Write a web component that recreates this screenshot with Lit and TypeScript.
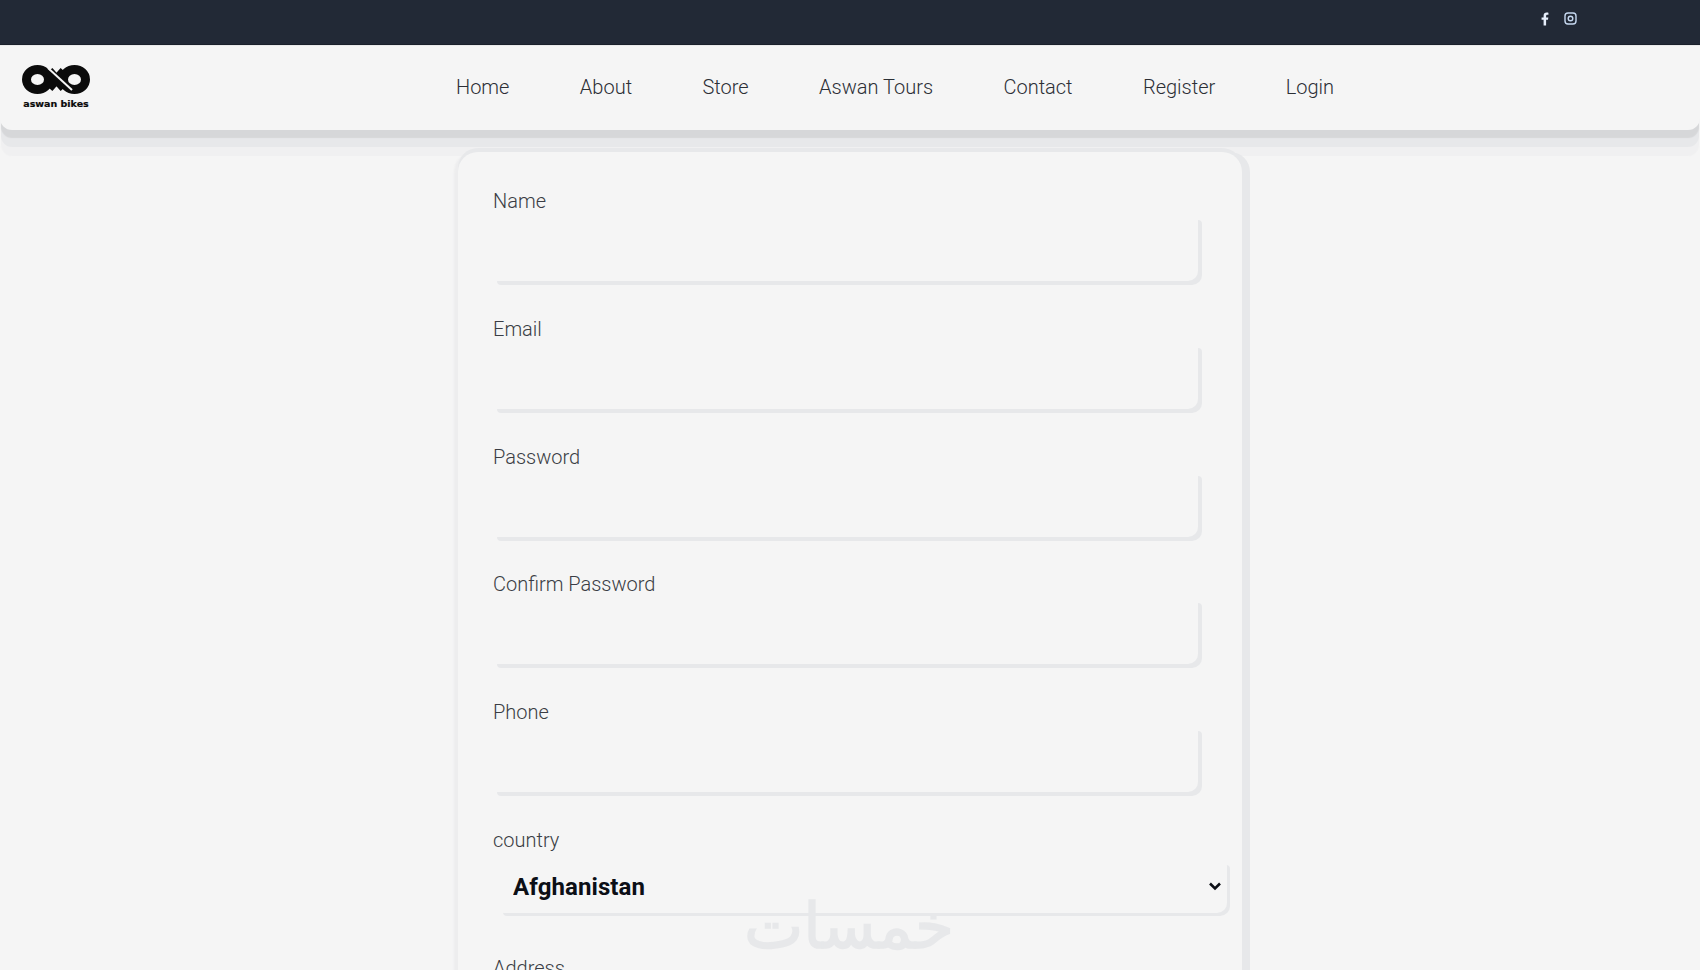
import { LitElement, html, css } from "lit";
import { customElement } from "lit/decorators.js";

@customElement("app-root")
export class AppRoot extends LitElement {
  static styles = css`
    :host { display: block; height: 970px; overflow: hidden; background: #f5f5f5; font-family: Roboto, "Liberation Sans", sans-serif; position: relative; }
    .top { height: 45px; background: #222936; border-bottom: 1px solid #1a202b; display: flex; justify-content: flex-end; align-items: flex-start; gap: 15px; padding: 12px 123px 0 0; box-sizing: border-box; }
    .top svg { display: block; }
    .nav { position: relative; z-index: 1; height: 85px; background: #f5f5f5; border-top: 1px solid #e9e9ea; box-sizing: border-box; display: flex; align-items: center; padding: 0 0 3px 22px; border-radius: 0 0 12px 12px; box-shadow: 0 9px 1px -1px #d6d7d9, 0 18px 0 -1px #e7e8ea, 0 27px 1px -1px #f0f0f1; }
    .logo { width: 68px; display: flex; flex-direction: column; align-items: center; margin-top: 2px; }
    .logo svg { display: block; }
    .logo span { font: 700 9.5px/12px "DejaVu Sans", sans-serif; -webkit-text-stroke: 0.2px #0b0b0b; color: #0b0b0b; white-space: nowrap; margin-top: 3px; }
    .links { display: flex; gap: 70.4px; margin-left: 366px; font-size: 20px; font-weight: 300; color: #2c2f35; }
    .card { position: relative; z-index: 2; margin: 22px 0 0 458px; width: 784px; box-sizing: border-box; padding: 38px 35px 0; background: #f5f5f5; border-radius: 20px 20px 0 0; box-shadow: 8px 0 0 #e7e8ea, 0 -4px 0 #e7e8ea, -4px 0 2px #ededee; height: 900px; }
    .group { height: 127.8px; }
    label { display: block; font-size: 20px; font-weight: 300; color: #3a3d44; line-height: 23px; margin-bottom: 3px; }
    input { display: block; width: 705px; height: 65px; box-sizing: border-box; border: 0; outline: 0; padding: 0 12px; background: #f5f5f5; border-radius: 4px 4px 10px 4px; box-shadow: 4px 4px 0 #e7e8ea; }
    .pick { position: relative; width: 727px; margin: 10px 0 0 7px; }
    .pick svg { position: absolute; right: 6px; top: 20px; pointer-events: none; }
    select { display: block; width: 100%; height: 51px; appearance: none; -webkit-appearance: none; box-sizing: border-box; border: 0; outline: 0; padding: 0 24px 0 13px; background: #f5f5f5; color: #0c0f16; border-radius: 4px 4px 10px 4px; font: 700 24px Roboto, sans-serif; letter-spacing: 0.1px; box-shadow: 3px 3px 0 #e7e8ea; }
    .mark { position: absolute; z-index: 3; left: 746px; top: 887px; width: 208px; text-align: center; font: 400 63px/80px "DejaVu Sans", sans-serif; -webkit-text-stroke: 1.5px #e7e8ea; color: #e7e8ea; pointer-events: none; white-space: nowrap; }
  `;

  render() {
    const fields = ["Name", "Email", "Password", "Confirm Password", "Phone"];
    return html`
      <div class="top">
        <svg width="8" height="14" viewBox="0 0 320 512" fill="#e6eefb"><path d="M279 288l14-93h-89v-60c0-25 12-50 52-50h41V6S260 0 225 0c-73 0-121 44-121 125v70H23v93h81v224h100V288z"/></svg>
        <svg width="13" height="13" viewBox="0 0 13 13" fill="none" stroke="#c6d8f0" stroke-width="1.4"><rect x="1" y="1" width="11" height="11" rx="3"/><circle cx="6.500" cy="6.500" r="2.300"/></svg>
      </div>
      <div class="nav">
        <div class="logo">
          <svg width="68" height="30" viewBox="0 0 68 30" fill="none" stroke="#0b0b0b">
            <ellipse cx="15.500" cy="14.500" rx="11" ry="10" stroke-width="9"/>
            <ellipse cx="52.500" cy="14.500" rx="11" ry="10" stroke-width="9"/>
            <path d="M27 6 L42 23 M27 23 L42 6" stroke-width="9"/>
            <path d="M26 3 L50 25" stroke="#f5f5f5" stroke-width="2"/>
          </svg>
          <span>aswan bikes</span>
        </div>
        <div class="links">
          <span>Home</span><span>About</span><span>Store</span><span>Aswan Tours</span><span>Contact</span><span>Register</span><span>Login</span>
        </div>
      </div>
      <div class="card">
        ${fields.map((f) => html`<div class="group"><label>${f}</label><input type="text" /></div>`)}
        <div class="group"><label>country</label>
          <div class="pick">
            <select><option>Afghanistan</option></select>
            <svg width="12" height="9" viewBox="0 0 12 9" fill="none" stroke="#0c0f16" stroke-width="2.600"><path d="M1 1.500 L6 6.500 L11 1.500"/></svg>
          </div>
        </div>
        <div class="group"><label>Address</label><input type="text" /></div>
      </div>
      <div class="mark" dir="rtl" lang="ar">خمسات</div>
    `;
  }
}
